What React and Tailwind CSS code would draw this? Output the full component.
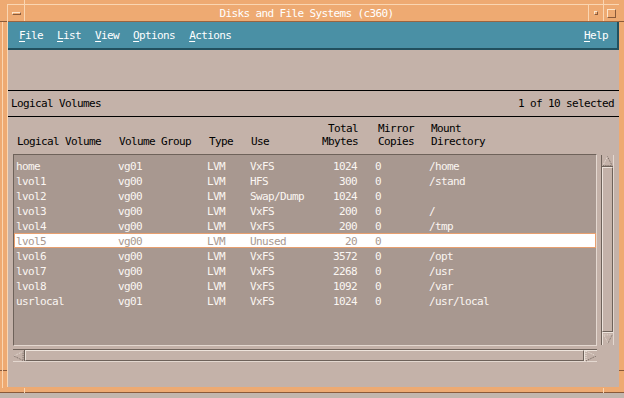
import React from "react";

const mono = "font-['DejaVu_Sans_Mono',monospace] text-[11px] tracking-[-0.62px] leading-[13px]";

const rows = [
  ["home", "vg01", "LVM", "VxFS", "1024", "0", "/home"],
  ["lvol1", "vg00", "LVM", "HFS", "300", "0", "/stand"],
  ["lvol2", "vg00", "LVM", "Swap/Dump", "1024", "0", ""],
  ["lvol3", "vg00", "LVM", "VxFS", "200", "0", "/"],
  ["lvol4", "vg00", "LVM", "VxFS", "200", "0", "/tmp"],
  ["lvol5", "vg00", "LVM", "Unused", "20", "0", ""],
  ["lvol6", "vg00", "LVM", "VxFS", "3572", "0", "/opt"],
  ["lvol7", "vg00", "LVM", "VxFS", "2268", "0", "/usr"],
  ["lvol8", "vg00", "LVM", "VxFS", "1092", "0", "/var"],
  ["usrlocal", "vg01", "LVM", "VxFS", "1024", "0", "/usr/local"],
];

const menus = ["File", "List", "View", "Options", "Actions"];

const MenuItem = ({ label }) => (
  <span>
    <span className="underline decoration-1 underline-offset-[2px]">{label[0]}</span>
    {label.slice(1)}
  </span>
);

const Arrow = ({ dir }) => {
  const light = "#eee4dc";
  const dark = "#6a5e56";
  let a, b, c;
  if (dir === "up") {
    a = "1,11 6,1";
    b = "6,1 11,11";
    c = "1,11 11,11";
  } else if (dir === "down") {
    a = "1,1 6,11";
    b = "6,11 11,1";
    c = "1,1 11,1";
  } else if (dir === "left") {
    a = "11,1 1,6";
    b = "1,6 11,11";
    c = "11,1 11,11";
  } else {
    a = "1,1 11,6";
    b = "11,6 1,11";
    c = "1,1 1,11";
  }
  return (
    <svg width="12" height="12" viewBox="0 0 12 12">
      <polyline points={a} fill="none" stroke={light} strokeWidth="1" strokeDasharray="1 1" />
      <polyline points={b} fill="none" stroke={dark} strokeWidth="1" strokeDasharray="1 1" />
      <polyline points={c} fill="none" stroke={dir === "up" || dir === "left" ? dark : light} strokeWidth="1" strokeDasharray="1 1" />
    </svg>
  );
};

const Cols = ({ cells, className, head }) => (
  <div className={"grid grid-cols-[104px_89px_43px_70px_37px_72px_1fr] " + className}>
    <div className="pl-[2px] whitespace-nowrap self-end">{cells[0]}</div>
    <div className="whitespace-nowrap self-end">{cells[1]}</div>
    <div className={(head ? "pl-[1px] " : "") + "whitespace-nowrap self-end"}>{cells[2]}</div>
    <div className="whitespace-nowrap self-end">{cells[3]}</div>
    <div className="text-right whitespace-nowrap self-end">{cells[4]}</div>
    <div className={(head ? "pl-[20px] " : "pl-[18px] ") + "whitespace-nowrap self-end"}>{cells[5]}</div>
    <div className={(head ? "pl-[1px] " : "") + "whitespace-nowrap self-end"}>{cells[6]}</div>
  </div>
);

export default function App() {
  return (
    <div className={"relative w-[624px] h-[398px] overflow-hidden bg-[#c2b6ae] " + mono}>
      <div className="h-[393px] bg-[#eeaa72] pt-[4px] pl-[7px] pr-[5px] pb-[5px] flex flex-col border-b border-[#8a5a3a]">
        <div className="flex-1 flex flex-col border-l border-t border-[#fad6b2]">
          {/* title bar */}
          <div className="h-[17px] flex border-b border-[#9a6440]">
            <div className="w-[17px] border-r border-[#fad6b2] flex items-center justify-center">
              <div className="w-[9px] h-[3px] border-t border-l border-[#fde6cc] border-b border-r border-b-[#8a5a3a] border-r-[#8a5a3a] mt-[1px]" />
            </div>
            <div className="flex-1 flex items-center justify-center text-white">Disks and File Systems (c360)</div>
            <div className="w-[15px] border-l border-[#fad6b2] flex items-center justify-center">
              <div className="w-[4px] h-[4px] border border-t-[#fde6cc] border-l-[#fde6cc] border-b-[#8a5a3a] border-r-[#8a5a3a]" />
            </div>
            <div className="w-[16px] border-l border-[#fad6b2] flex items-center justify-center">
              <div className="w-[9px] h-[9px] border border-t-[#fde6cc] border-l-[#fde6cc] border-b-[#8a5a3a] border-r-[#8a5a3a]" />
            </div>
          </div>

          {/* client area */}
          <div className="flex-1 flex flex-col bg-[#c4b2a9]">
            <div className="h-[28px] bg-[#4a90a5] border-b-2 border-r-2 border-[#22505e] flex items-center pl-[11px] pr-[9px] text-white">
              <div className="flex gap-[14px]">
                {menus.map((m) => (
                  <MenuItem key={m} label={m} />
                ))}
              </div>
              <div className="ml-auto">
                <MenuItem label="Help" />
              </div>
            </div>

            <div className="h-[40px]" />
            <div className="h-px bg-black" />
            <div className="h-[25px] flex items-center justify-between pl-[3px] pr-[5px] text-black">
              <span>Logical Volumes</span>
              <span>1 of 10 selected</span>
            </div>
            <div className="h-px bg-black" />

            <div className="h-[37px] pt-[5px] pl-[7px] text-black">
              <Cols
                head
                cells={["Logical Volume", "Volume Group", "Type", "Use", <>Total<br />Mbytes</>, <>Mirror<br />Copies</>, <>Mount<br />Directory</>]}
              />
            </div>

            <div className="flex items-start pl-[5px] pr-[5px]">
              <div className="flex flex-col w-[584px]">
                <div className="h-[192px] bg-[#a89890] border border-t-[#6e625a] border-l-[#6e625a] border-b-[#e4d8d0] border-r-[#e4d8d0] pt-[3px]">
                  {rows.map((r, i) => {
                    const sel = i === 5;
                    return (
                      <Cols
                        key={r[0]}
                        cells={r}
                        className={
                          "h-[15px] items-center " +
                          (sel
                            ? "bg-white text-[#a89890] outline outline-1 -outline-offset-1 outline-[#e8a070]"
                            : "text-[#fbf6f2]")
                        }
                      />
                    );
                  })}
                </div>

                {/* horizontal scrollbar */}
                <div className="mt-[3px] h-[13px] flex border-t border-[#6e625a] border-b border-b-[#e4d8d0]">
                  <div className="w-[12px] flex items-center justify-center border-r border-[#6e625a]">
                    <Arrow dir="left" />
                  </div>
                  <div className="flex-1 border-l border-t border-[#eee4dc] border-b border-r border-b-[#6e625a] border-r-[#6e625a]" />
                  <div className="w-[13px] flex items-center justify-center border-l border-t border-[#eee4dc]">
                    <Arrow dir="right" />
                  </div>
                </div>
              </div>

              {/* vertical scrollbar */}
              <div className="ml-[4px] mt-[1px] w-[13px] h-[190px] flex flex-col border-l border-[#6e625a] border-r border-r-[#e4d8d0]">
                <div className="h-[12px] flex items-center justify-center border-b border-[#6e625a]">
                  <Arrow dir="up" />
                </div>
                <div className="flex-1 border-l border-t border-[#eee4dc] border-b border-r border-b-[#6e625a] border-r-[#6e625a]" />
                <div className="h-[13px] flex items-center justify-center border-t border-l border-[#eee4dc]">
                  <Arrow dir="down" />
                </div>
              </div>
            </div>
          </div>
        </div>
      </div>

      {/* window frame resize-corner marks */}
      <div className="absolute left-[24px] top-0 w-px h-[4px] bg-[#fad6b2]" />
      <div className="absolute left-[603px] top-0 w-px h-[4px] bg-[#fad6b2]" />
      <div className="absolute left-[24px] top-[388px] w-px h-[5px] bg-[#fad6b2]" />
      <div className="absolute left-[603px] top-[388px] w-px h-[5px] bg-[#fad6b2]" />
      <div className="absolute left-0 top-[21px] w-[7px] h-px bg-[#8a5a3a]" />
      <div className="absolute left-0 top-[370px] w-[7px] h-px bg-[#8a5a3a]" />
      <div className="absolute right-0 top-[21px] w-[5px] h-px bg-[#8a5a3a]" />
      <div className="absolute right-0 top-[370px] w-[5px] h-px bg-[#8a5a3a]" />
      <div className="absolute left-[2px] top-[22px] w-px h-[366px] bg-[#fad6b2]" />
    </div>
  );
}
